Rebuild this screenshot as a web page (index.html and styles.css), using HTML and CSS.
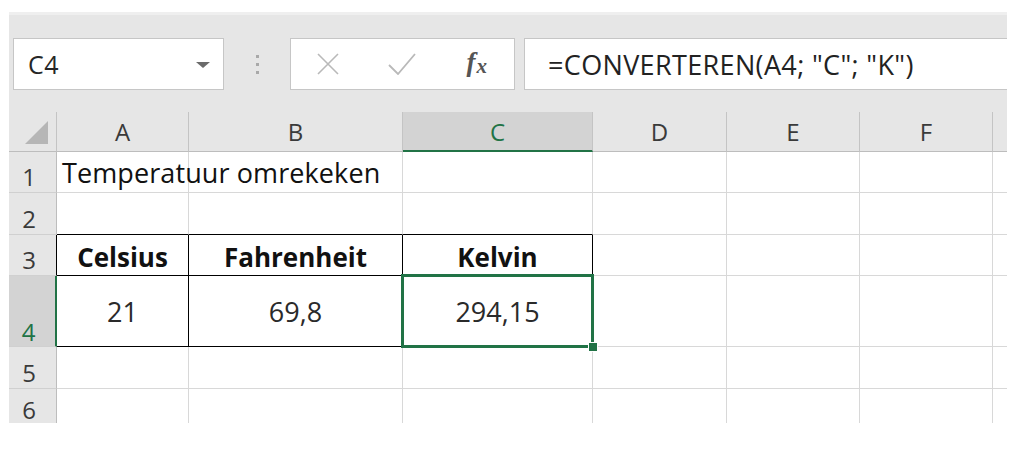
FILE: index.html
```html
<!DOCTYPE html>
<html lang="nl">
<head>
<meta charset="utf-8">
<title>CONVERTEREN</title>
<link rel="stylesheet" href="styles.css">
</head>
<body>
<div class="app">
  <div class="toolbar">
    <div class="namebox">
      <span class="name">C4</span>
      <span class="caret"></span>
    </div>
    <div class="grip"><i></i><i></i><i></i></div>
    <div class="fxbox">
      <span class="btn">
        <svg width="24" height="22" viewBox="0 0 24 22"><path d="M2 1 L22 21 M22 1 L2 21" stroke="#b9b9b9" stroke-width="1.6" fill="none"/></svg>
      </span>
      <span class="btn">
        <svg width="28" height="22" viewBox="0 0 28 22"><path d="M1 12 L10 21 L27 1" stroke="#b9b9b9" stroke-width="1.8" fill="none"/></svg>
      </span>
      <span class="btn fx"><i>f</i><span class="x">x</span></span>
    </div>
    <div class="formula">=CONVERTEREN(A4; "C"; "K")</div>
  </div>

  <div class="sheet">
    <div class="hd corner"><span class="tri"></span></div>
    <div class="hd col">A</div>
    <div class="hd col">B</div>
    <div class="hd col sel">C</div>
    <div class="hd col">D</div>
    <div class="hd col">E</div>
    <div class="hd col">F</div>
    <div class="hd col last"></div>

    <div class="hd row">1</div>
    <div class="c title">Temperatuur omrekeken</div>
    <div class="c"></div>
    <div class="c"></div>
    <div class="c"></div>
    <div class="c"></div>
    <div class="c"></div>
    <div class="c last"></div>

    <div class="hd row">2</div>
    <div class="c above"></div>
    <div class="c above"></div>
    <div class="c above"></div>
    <div class="c"></div>
    <div class="c"></div>
    <div class="c"></div>
    <div class="c last"></div>

    <div class="hd row trow">3</div>
    <div class="c t th">Celsius</div>
    <div class="c t th">Fahrenheit</div>
    <div class="c t th">Kelvin</div>
    <div class="c"></div>
    <div class="c"></div>
    <div class="c"></div>
    <div class="c last"></div>

    <div class="hd row rsel">4</div>
    <div class="c t val">21</div>
    <div class="c t val">69,8</div>
    <div class="c t val active">294,15<span class="handle"></span></div>
    <div class="c"></div>
    <div class="c"></div>
    <div class="c"></div>
    <div class="c last"></div>

    <div class="hd row">5</div>
    <div class="c"></div>
    <div class="c"></div>
    <div class="c"></div>
    <div class="c"></div>
    <div class="c"></div>
    <div class="c"></div>
    <div class="c last"></div>

    <div class="hd row cut">6</div>
    <div class="c cut"></div>
    <div class="c cut"></div>
    <div class="c cut"></div>
    <div class="c cut"></div>
    <div class="c cut"></div>
    <div class="c cut"></div>
    <div class="c cut last"></div>
  </div>
</div>
</body>
</html>
```

FILE: styles.css
```css
html, body {
  margin: 0;
  padding: 0;
  background: #ffffff;
}

body {
  font-family: "Open Sans", "Liberation Sans", sans-serif;
  color: #1a1a1a;
}

.app {
  margin: 12px 0 0 9px;
  width: 998px;
}

/* ---------- toolbar / formula bar ---------- */
.toolbar {
  display: flex;
  align-items: flex-start;
  height: 100px;
  box-sizing: border-box;
  border-top: 3px solid #efefef;
  padding: 23px 0 0 4px;
  background: #e6e6e6;
}

.namebox {
  width: 211px;
  height: 52px;
  box-sizing: border-box;
  background: #fff;
  border: 1px solid #c6c6c6;
  display: flex;
  align-items: center;
  justify-content: space-between;
  padding: 0 13px 0 14px;
}

.name {
  font-size: 25px;
  color: #262626;
  letter-spacing: 0.5px;
}

.caret {
  width: 0;
  height: 0;
  border-left: 7px solid transparent;
  border-right: 7px solid transparent;
  border-top: 6px solid #6b6b6b;
  margin-top: 1px;
}

.grip {
  width: 66px;
  height: 52px;
  display: flex;
  flex-direction: column;
  align-items: center;
  justify-content: center;
  gap: 5px;
}

.grip i {
  display: block;
  width: 3px;
  height: 3px;
  background: #a9a9a9;
}

.fxbox {
  width: 225px;
  height: 52px;
  box-sizing: border-box;
  background: #fff;
  border: 1px solid #c6c6c6;
  display: flex;
  align-items: center;
}

.btn {
  flex: 1;
  display: flex;
  justify-content: center;
  align-items: center;
}

.fx {
  font-family: "Liberation Serif", "DejaVu Serif", serif;
  font-style: italic;
  color: #555;
  font-size: 27px;
  font-weight: bold;
  padding-bottom: 4px;
}

.fx i {
  font-style: italic;
}

.fx .x {
  font-size: 21px;
  margin-top: 8px;
  margin-left: 1px;
}

.formula {
  flex: 1;
  height: 52px;
  box-sizing: border-box;
  margin-left: 9px;
  background: #fff;
  border: 1px solid #c6c6c6;
  border-right: none;
  display: flex;
  align-items: center;
  padding-left: 23px;
  font-size: 27px;
  letter-spacing: 0.35px;
  color: #222;
}

/* ---------- sheet grid ---------- */
.sheet {
  display: grid;
  grid-template-columns: 48px 132px 214px 190px 134px 133px 133px 14px;
  grid-template-rows: 40px 41px 42px 41px 71px 42px 34px;
}

.sheet > div {
  box-sizing: border-box;
  min-width: 0;
}

.hd {
  background: #e6e6e6;
  color: #3a3a3a;
  font-size: 24px;
  display: flex;
  justify-content: center;
}

.col {
  align-items: center;
  border-right: 1px solid #c4c4c4;
  border-bottom: 1px solid #bdbdbd;
}

.col.last {
  border-right: none;
}

.corner {
  border-right: 1px solid #c4c4c4;
  border-bottom: 1px solid #bdbdbd;
  position: relative;
}

.tri {
  position: absolute;
  right: 8px;
  bottom: 7px;
  width: 0;
  height: 0;
  border-left: 23px solid transparent;
  border-bottom: 23px solid #b6b6b6;
}

.col.sel {
  background: #d3d3d3;
  color: #217346;
  border-bottom: 2px solid #217346;
}

.row {
  align-items: flex-end;
  padding: 0 7px 3px 0;
  line-height: 1;
  border-right: 1px solid #bdbdbd;
  border-bottom: 1px solid #d0d0d0;
}

.row.rsel {
  background: #d3d3d3;
  color: #217346;
  border-right: 2px solid #217346;
  padding-bottom: 2px;
}

.row.trow {
  border-right-color: #000;
}

.row.cut {
  border-bottom: none;
  align-items: flex-end;
  padding-bottom: 1px;
}

.c {
  background: #fff;
  border-right: 1px solid #d8d8d8;
  border-bottom: 1px solid #d8d8d8;
  font-size: 27px;
  line-height: 1;
  color: #111;
  display: flex;
}

.c.last {
  border-right: none;
}

.c.cut {
  border-bottom: none;
}

.title {
  align-items: flex-end;
  padding: 0 0 6px 5px;
  white-space: nowrap;
  position: relative;
  z-index: 1;
  letter-spacing: 0.1px;
}

.c.above {
  border-bottom-color: #000;
}

.c.t {
  border-right-color: #000;
  border-bottom-color: #000;
  justify-content: center;
}

.th {
  font-weight: bold;
  align-items: flex-end;
  padding-bottom: 5px;
  font-size: 26px;
}

.val {
  align-items: center;
  color: #2a2a2a;
}

.active {
  position: relative;
}

.active::after {
  content: "";
  position: absolute;
  left: -2px;
  top: -2px;
  right: -2px;
  bottom: -2px;
  border: 3px solid #217346;
  pointer-events: none;
}

.handle {
  position: absolute;
  right: -6px;
  bottom: -6px;
  width: 8px;
  height: 8px;
  background: #217346;
  border: 1px solid #fff;
  z-index: 2;
}
```
